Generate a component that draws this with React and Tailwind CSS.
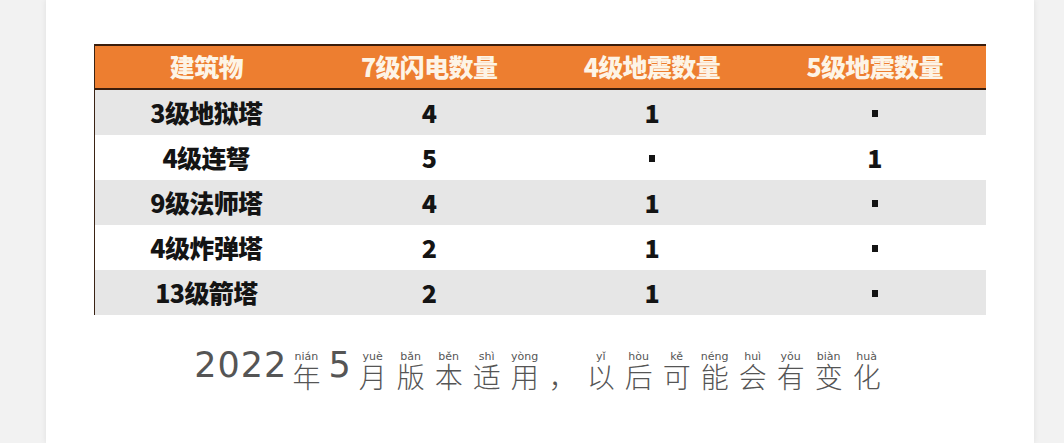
const headers = ['建筑物', '7级闪电数量', '4级地震数量', '5级地震数量']

const rows = [
  ['3级地狱塔', '4', '1', '·'],
  ['4级连弩', '5', '·', '1'],
  ['9级法师塔', '4', '1', '·'],
  ['4级炸弹塔', '2', '1', '·'],
  ['13级箭塔', '2', '1', '·'],
]

const caption = [
  { text: '2022' },
  { char: '年', py: 'nián' },
  { text: '5' },
  { char: '月', py: 'yuè' },
  { char: '版', py: 'bǎn' },
  { char: '本', py: 'běn' },
  { char: '适', py: 'shì' },
  { char: '用', py: 'yòng' },
  { char: '，', py: '' },
  { char: '以', py: 'yǐ' },
  { char: '后', py: 'hòu' },
  { char: '可', py: 'kě' },
  { char: '能', py: 'néng' },
  { char: '会', py: 'huì' },
  { char: '有', py: 'yǒu' },
  { char: '变', py: 'biàn' },
  { char: '化', py: 'huà' },
]

const cjk = { fontFamily: '"Noto Sans CJK SC", "Noto Sans", sans-serif' }

function Cell({ children, head }) {
  return (
    <div
      className={
        head
          ? 'flex items-center justify-center text-[25px] font-black tracking-tight text-[#fdf4e6]'
          : 'flex items-center justify-center text-[25px] font-black tracking-tight text-[#141414]'
      }
      style={cjk}
    >
      {children}
    </div>
  )
}

export default function App() {
  return (
    <div className="flex h-[443px] w-[1064px] bg-[#f2f2f2]">
      <div className="ml-[46px] flex w-[988px] flex-col bg-white px-[48px] pt-[44px] shadow-[0_0_6px_rgba(0,0,0,0.08)]">
        <div className="border-l border-[#3a2314]">
          <div className="grid h-[46px] grid-cols-4 border-y-2 border-[#3a1d0c] bg-[#ed7e30]">
            {headers.map((h) => (
              <Cell key={h} head>
                {h}
              </Cell>
            ))}
          </div>
          {rows.map((r, i) => (
            <div
              key={i}
              className={i % 2 === 0 ? 'grid h-[45px] grid-cols-4 bg-[#e6e6e6]' : 'grid h-[45px] grid-cols-4 bg-white'}
            >
              {r.map((c, j) => (
                <Cell key={j}>
                  {c === '·' ? <span className="mt-[2px] block h-[7px] w-[6px] bg-[#141414]" aria-label="-" /> : c}
                </Cell>
              ))}
            </div>
          ))}
        </div>

        <div className="mt-[37px] flex items-start justify-center text-[#555555]">
          {caption.map((c, i) =>
            c.text ? (
              <span
                key={i}
                className={
                  c.text === '5'
                    ? 'mx-[3px] mt-[-4px] text-[35px] leading-none'
                    : 'mt-[-4px] text-[35px] leading-none tracking-[1px]'
                }
                style={{ fontFamily: '"DejaVu Sans", sans-serif' }}
              >
                {c.text}
              </span>
            ) : (
              <span key={i} className="flex w-[38px] flex-col items-center">
                <span
                  className="h-[10px] text-[11px] leading-[10px] text-[#555555]"
                  style={{ fontFamily: '"DejaVu Sans", sans-serif' }}
                >
                  {c.py}
                </span>
                <span className="text-[28px] font-light leading-[28px]" style={cjk}>
                  {c.char}
                </span>
              </span>
            )
          )}
        </div>
      </div>
    </div>
  )
}
